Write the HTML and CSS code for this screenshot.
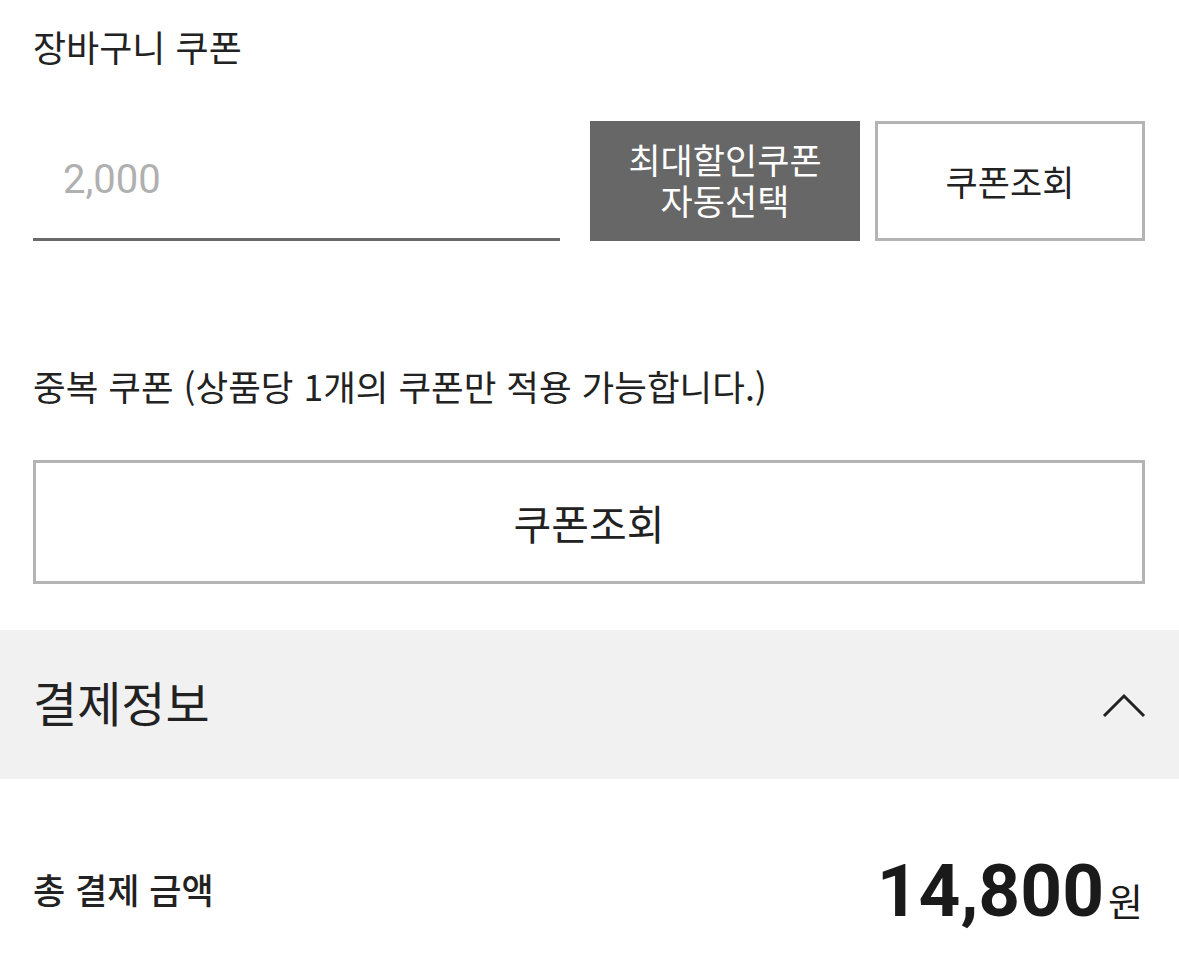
FILE: index.html
```html
<!DOCTYPE html>
<html lang="ko">
<head>
<meta charset="utf-8">
<title>쿠폰 / 결제정보</title>
<link rel="stylesheet" href="styles.css">
</head>
<body>
<section class="coupon">
  <h2 class="coupon-title">장바구니 쿠폰</h2>
  <div class="coupon-row">
    <div class="coupon-input">
      <span class="placeholder">2,000</span>
    </div>
    <button class="btn btn-dark">최대할인쿠폰<br>자동선택</button>
    <button class="btn btn-outline">쿠폰조회</button>
  </div>
  <h2 class="coupon-title dup">중복 쿠폰 (상품당 1개의 쿠폰만 적용 가능합니다.)</h2>
  <button class="btn btn-outline btn-wide">쿠폰조회</button>
</section>
<section class="pay-head">
  <h2 class="pay-title">결제정보</h2>
  <svg class="chevron" width="44" height="26" viewBox="0 0 44 26"><path d="M2 24 L22 4 L42 24" fill="none" stroke="#222" stroke-width="3"/></svg>
</section>
<section class="total">
  <span class="total-label">총 결제 금액</span>
  <span class="total-amount"><span class="num">14,800</span><span class="won">원</span></span>
</section>
</body>
</html>
```

FILE: styles.css
```css
* { box-sizing: border-box; }
html, body { margin: 0; padding: 0; background: #fff; }
body {
  font-family: "Roboto", "Noto Sans CJK KR", sans-serif;
  color: #222;
  width: 1179px;
}
.coupon {
  padding: 23px 34px 46px 33px;
  display: flex;
  flex-direction: column;
}
.coupon-title {
  margin: 0;
  font-family: "Noto Sans CJK KR", sans-serif;
  font-weight: 400;
  font-size: 36px;
  line-height: 46px;
  color: #222;
}
.coupon-title.dup { font-size: 35.5px; }
.coupon-row {
  display: flex;
  margin-top: 52px;
  height: 120px;
  margin-bottom: 122px;
}
.coupon-input {
  flex: 1;
  border-bottom: 3px solid #6a6a6a;
  display: flex;
  align-items: center;
  padding-left: 30px;
  margin-right: 30px;
}
.placeholder {
  font-family: "Roboto", sans-serif;
  font-size: 40px;
  color: #b0b0b0;
}
.btn {
  font-family: "Noto Sans CJK KR", sans-serif;
  font-size: 35px;
  line-height: 40px;
  border: none;
  padding: 0;
  margin: 0;
  cursor: pointer;
}
.btn-dark {
  width: 270px;
  background: #676767;
  color: #fff;
  margin-right: 15px;
  padding-bottom: 4px;
  line-height: 41px;
}
.btn-outline {
  width: 270px;
  background: #fff;
  border: 3px solid #b4b4b4;
  color: #222;
}
.btn-wide {
  width: 100%;
  height: 124px;
  margin-top: 51px;
  font-size: 41px;
  line-height: 48px;
}
.pay-head {
  background: #f1f1f1;
  height: 149px;
  padding: 0 33px;
  display: flex;
  align-items: center;
  justify-content: space-between;
}
.pay-title {
  margin: 0 0 8px;
  font-family: "Noto Sans CJK KR", sans-serif;
  font-weight: 400;
  font-size: 48px;
  color: #222;
}
.chevron { display: block; }
.total {
  display: flex;
  justify-content: space-between;
  align-items: center;
  padding: 69px 36px 0 33px;
}
.total-label {
  font-family: "Noto Sans CJK KR", sans-serif;
  font-weight: 500;
  font-size: 35px;
  color: #222;
  margin-bottom: 6px;
}
.total-amount { display: flex; align-items: baseline; color: #1a1a1a; }
.num {
  font-family: "Roboto", sans-serif;
  font-weight: 700;
  font-size: 73px;
}
.won {
  font-family: "Noto Sans CJK KR", sans-serif;
  font-size: 38px;
  margin-left: 4px;
}
```
